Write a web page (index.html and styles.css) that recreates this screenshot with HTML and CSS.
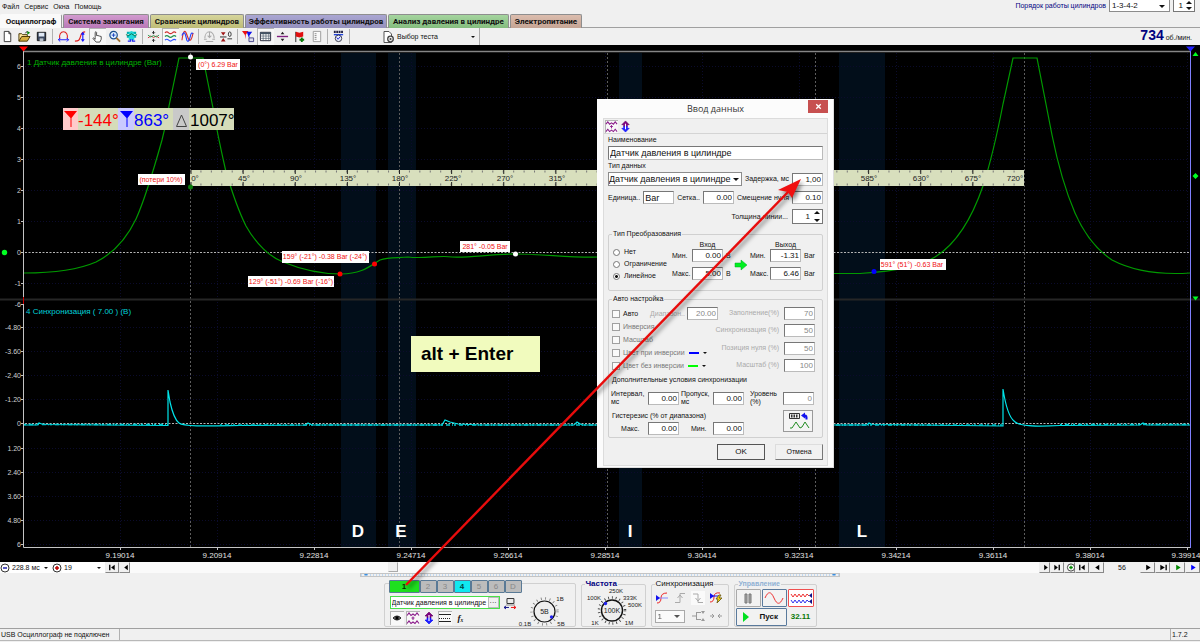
FILE: index.html
```html
<!DOCTYPE html>
<html lang="ru">
<head>
<meta charset="utf-8">
<title>USB Осциллограф</title>
<link rel="stylesheet" href="styles.css">
</head>
<body>
<svg class="defs" aria-hidden="true">
  <symbol id="i-waves" viewBox="0 0 14 14"><path d="M1 4.500l2-2.500 2 2.500L7 3l2 1.500L11 2l2 2.500M1 12.500l2-2.500 2 2.500L7 11l2 1.500 2-2.500 2 2.500" fill="none" stroke="#8a1a8a" stroke-width="1.100"/><path d="M7 5.500v3.500M5.500 7h3" stroke="#8a1a8a"/></symbol>
  <symbol id="i-updown" viewBox="0 0 14 14"><path d="M7 1l4 4H9v2H5V5H3z" fill="#800080" stroke="#600060" stroke-width=".6"/><path d="M7 13l4-4H9V7H5v2H3z" fill="#22f" stroke="#00f" stroke-width=".6"/><path d="M7 4v6" stroke="#fff" stroke-width="1.200"/></symbol>
</svg>
<div class="app">
  <header class="head">
    <div class="head-left">
      <nav class="menu"><button>Файл</button><button>Сервис</button><button>Окна</button><button>Помощь</button></nav>
      <div class="tabs" role="tablist">
        <button class="tab tab-on" role="tab">Осциллограф</button>
        <button class="tab tab-pink" role="tab">Система зажигания</button>
        <button class="tab tab-olive" role="tab">Сравнение цилиндров</button>
        <button class="tab tab-violet" role="tab">Эффективность работы цилиндров</button>
        <button class="tab tab-green" role="tab">Анализ давления в цилиндре</button>
        <button class="tab tab-rose" role="tab">Электропитание</button>
      </div>
    </div>
    <div class="order">
      <label for="order">Порядок работы цилиндров</label>
      <span class="pick order-pick"><select id="order"><option>1-3-4-2</option></select></span>
      <span class="spin order-spin"><input aria-label="Цилиндр" value="1"><i></i></span>
    </div>
  </header>

  <div class="toolbar">
    <button class="tool" aria-label="Новый"><svg viewBox="0 0 14 14"><path d="M3.500 1.500h5l2 2.500v8.500h-7z" fill="#fff" stroke="#333"/><path d="M8.500 1.500V4h2" fill="none" stroke="#333"/></svg></button>
    <button class="tool" aria-label="Открыть"><svg viewBox="0 0 14 14"><path d="M1 12V4h3l1 1h5v2" fill="#ffe9a0" stroke="#443300"/><path d="M1 12l3-5h9l-3 5z" fill="#d8b040" stroke="#443300"/><path d="M8 3.500c1-2 2-2 3-1" fill="none" stroke="#222"/><path d="M10 1l3 2-3 2z" fill="#080"/></svg></button>
    <button class="tool" aria-label="Сохранить"><svg viewBox="0 0 14 14"><path d="M2.500 2.500h9v9h-9z" fill="#39465e" stroke="#111"/><path d="M4 3h6v4H4z" fill="#dfe8f4"/><path d="M5 9h4v3H5z" fill="#b8c0cc"/></svg></button>
    <i class="sep"></i>
    <button class="tool" aria-label="Период"><svg viewBox="0 0 14 14"><path d="M3 9.500C2 5 4 2 7 2s5 3 4 7.500" fill="none" stroke="#e02020" stroke-width="1.100"/><path d="M1.500 10.500h11M3.500 8.500l-2 2 2 2M10.500 8.500l2 2-2 2" fill="none" stroke="#1515ff"/></svg></button>
    <button class="tool" aria-label="Амплитуда"><svg viewBox="0 0 14 14"><path d="M1 12c4 0 5-1 6-5s2-5 5-5" fill="none" stroke="#e02020" stroke-width="1.200"/><path d="M9.500 3v9M8 5l1.500-2L11 5M8 10l1.500 2L11 10" fill="none" stroke="#1515ff" stroke-width="1.200"/></svg></button>
    <button class="tool tool-on" aria-label="Рука"><svg viewBox="0 0 14 14"><path d="M4.500 8V2.500q1-1.500 1.500 0V6l1.500 0 1.500.5 2 .5v3l-1.500 3h-4L2 9q0-1.500 2.500 1z" fill="#fff" stroke="#333" stroke-width=".9"/></svg></button>
    <button class="tool" aria-label="Масштаб"><svg viewBox="0 0 14 14"><circle cx="6" cy="5.500" r="4" fill="#dff0ff" stroke="#1b4f8f" stroke-width="1.300"/><path d="M6 3.500v4M4 5.500h4" stroke="#1540c0"/><path d="M9 8.500l4 4" stroke="#a07030" stroke-width="2"/></svg></button>
    <button class="tool" aria-label="Авто"><svg viewBox="0 0 14 14"><path d="M2 3h10M2 7h10" stroke="#00b0b0" stroke-width="2.500"/><path d="M4 3l3-2 3 2v8H4z" fill="#20d8d8"/><path d="M1 5l3 1 3-2 3 2 3-1" fill="none" stroke="#087048"/><path d="M3 12h3v-2M11 12H8v-2" fill="none" stroke="#22e" stroke-width="1.200"/></svg></button>
    <i class="sep"></i>
    <button class="tool" aria-label="Сжать"><svg viewBox="0 0 14 14"><path d="M1 8.500l3-2 3 1.500 3-1.500 3 2" fill="none" stroke="#d03030"/><path d="M1 5.500l3 2L7 6l3 1.500 3-2" fill="none" stroke="#2a9a50"/><path d="M7 1v3M5.500 2.500L7 4l1.500-1.500M7 13v-3M5.500 11.500L7 10l1.500 1.500" fill="none" stroke="#222"/></svg></button>
    <button class="tool tool-on" aria-label="Раздельно"><svg viewBox="0 0 14 14"><path d="M1 3q2-2 4 0t4 0 4 0" fill="none" stroke="#d03030" stroke-width="1.200"/><path d="M1 7q2-2 4 0t4 0 4 0" fill="none" stroke="#209050" stroke-width="1.200"/><path d="M1 11q2-2 4 0t4 0 4 0" fill="none" stroke="#3050ff" stroke-width="1.200"/></svg></button>
    <button class="tool" aria-label="Вместе"><svg viewBox="0 0 14 14"><path d="M1 11C3-3 5 1 7 7s4 6 6-4" fill="none" stroke="#d03030" stroke-width="1.200"/><path d="M1 6c3-7 4 0 5 4s3 2 4-3 2-4 3-3" fill="none" stroke="#2040ff" stroke-width="1.200"/></svg></button>
    <i class="sep"></i>
    <button class="tool" aria-label="Автомасштаб"><svg viewBox="0 0 14 14"><path d="M2 9C2 5 4 2 7 2s5 3 5 7M7 2v6M5 6l2 2 2-2M1 10h3M10 10h3M3 12.500h8" fill="none" stroke="#aaa" stroke-width="1.100"/></svg></button>
    <button class="tool" aria-label="Ноль"><svg viewBox="0 0 14 14"><path d="M0 7.500h7" stroke="#222"/><path d="M1 2.500h5L3.500 6zM1 12.500h5l-2.500-4z" fill="#a01818"/><ellipse cx="10.500" cy="4.500" rx="1.500" ry="2.500" fill="none" stroke="#333"/><path d="M8 9.500h5" stroke="#333"/></svg></button>
    <i class="sep"></i>
    <button class="tool" aria-label="Маркер"><svg viewBox="0 0 14 14"><path d="M0 1h7L4 5v5L3 5z" fill="#e11"/><path d="M5 2h6L8 6v4z" fill="#11e"/><path d="M7.500 8.500h5v4h-5z" fill="#dde" stroke="#448"/></svg></button>
    <button class="tool tool-on" aria-label="Таблица"><svg viewBox="0 0 14 14"><path d="M1.500 2.500h11v9h-11z" fill="#fff" stroke="#223"/><path d="M1 3.500h12" stroke="#456" stroke-width="2"/><path d="M4.500 3v9M7.500 3v9M10.500 3v9M1 6.500h12M1 9h12" stroke="#456" stroke-width=".7"/></svg></button>
    <button class="tool" aria-label="Разделить"><svg viewBox="0 0 14 14"><path d="M1 7h12" stroke="#802080" stroke-width="1.500"/><path d="M5 4.500L7 2l2 2.500zM5 9.500L7 12l2-2.500z" fill="#222"/></svg></button>
    <button class="tool" aria-label="Флаг"><svg viewBox="0 0 14 14"><path d="M3 2v11" stroke="#222"/><path d="M3 2l4 1 4-1v5L7 8 3 7z" fill="#e01010"/><path d="M9.500 8v5M7 10.500h5" stroke="#087808" stroke-width="2"/></svg></button>
    <button class="tool" aria-label="Отчёт"><svg viewBox="0 0 14 14"><path d="M3.500 1.500h8v11h-8z" fill="#fafafa" stroke="#999"/><path d="M5 4h2M5 6h2M5 8h2M5 10h2" stroke="#888"/></svg></button>
    <i class="sep"></i>
    <button class="tool" aria-label="Авто поиск"><svg viewBox="0 0 14 14"><path d="M2 2h10" stroke="#224" stroke-width="2.500" stroke-dasharray="2 .6"/><path d="M2 5h10" stroke="#24d" stroke-width="1.500"/><circle cx="7" cy="9" r="3.500" fill="#e8f0ff" stroke="#334"/><path d="M5 8l1.500 2L9 7" fill="none" stroke="#22c"/></svg></button>
    <i class="sep"></i>
    <button class="test"><svg viewBox="0 0 14 14"><path d="M3 1.500h5l2.500 2.500v8.500H3z" fill="#fff" stroke="#555"/><circle cx="9.500" cy="9" r="2.800" fill="#eee" stroke="#444" stroke-width="1.300"/><circle cx="9.500" cy="9" r="1" fill="#444"/></svg><span>Выбор теста</span><b class="caret"></b></button>
    <output class="rpm"><strong>734</strong> об./мин.</output>
  </div>

  <main class="stage">
    <svg class="chart" viewBox="0 45 1200 517" role="img" aria-label="Осциллограмма">
      <rect y="45" width="1200" height="517"/>
      <g fill="#020e1a"><path d="M341 53h35v494h-35zM388 53h28v494h-28zM619 53h23v494h-23zM839 53h46v494h-46z"/></g>
      <g stroke="#0b0b2c" stroke-dasharray="1 2"><path d="M120.500 53v494M217.500 53v494M314.500 53v494M411.500 53v494M508.500 53v494M605.500 53v494M702.500 53v494M799.500 53v494M896.500 53v494M993.500 53v494M1090.500 53v494M1187.500 53v494"/><path d="M25 66.500h1164M25 97.500h1164M25 128.500h1164M25 159.500h1164M25 190.500h1164M25 221.500h1164M25 283.500h1164M25 327.500h1164M25 351.500h1164M25 375.500h1164M25 399.500h1164M25 448.500h1164M25 472.500h1164M25 496.500h1164M25 520.500h1164M25 544.500h1164"/></g>
      <path d="M190.500 53v494M399.500 53v494M607.500 53v494M815.500 53v494M1024.500 53v494" stroke="#5c5c5c" stroke-dasharray="2 2"/>
      <path d="M25 252.500h1165M25 423.500h1165" stroke="#b4b4b4" stroke-dasharray="2 1.500"/>
      <path d="M0 299.500h1200" stroke="#262626" stroke-width="2"/>
      <path d="M24 51.500h1166" stroke="#858585" stroke-width="1.500"/>
      <path d="M23.500 51v496.500H1190" fill="none" stroke="#c4c4c4"/>
      <path d="M23.500 297v7" stroke="#c00"/>
      <path d="M21 66.500h2M21 97.500h2M21 128.500h2M21 159.500h2M21 190.500h2M21 221.500h2M21 252.500h2M21 283.500h2M21 304.500h2M21 327.500h2M21 351.500h2M21 375.500h2M21 399.500h2M21 423.500h2M21 448.500h2M21 472.500h2M21 496.500h2M21 520.500h2M21 544.500h2" stroke="#c4c4c4"/>
      <path d="M120.500 548v2M217.500 548v2M314.500 548v2M411.500 548v2M508.500 548v2M605.500 548v2M702.500 548v2M799.500 548v2M896.500 548v2M993.500 548v2M1090.500 548v2M1187.500 548v2" stroke="#c4c4c4"/>
      <g class="ylab"><text x="21" y="69">6</text><text x="21" y="100">5</text><text x="21" y="131">4</text><text x="21" y="162">3</text><text x="21" y="193">2</text><text x="21" y="224">1</text><text x="21" y="255">0</text><text x="21" y="286">-1</text><text x="21" y="307">-6</text><text x="21" y="330">-4.80</text><text x="21" y="354">-3.60</text><text x="21" y="378">-2.40</text><text x="21" y="402">-1.20</text><text x="21" y="426">0</text><text x="21" y="451">1.20</text><text x="21" y="475">2.40</text><text x="21" y="499">3.60</text><text x="21" y="523">4.80</text><text x="21" y="547">6</text></g>
      <g class="xlab"><text x="120" y="558">9.19014</text><text x="217" y="558">9.20914</text><text x="314" y="558">9.22814</text><text x="411" y="558">9.24714</text><text x="508" y="558">9.26614</text><text x="605" y="558">9.28514</text><text x="702" y="558">9.30414</text><text x="799" y="558">9.32314</text><text x="896" y="558">9.34214</text><text x="993" y="558">9.36114</text><text x="1090" y="558">9.38014</text><text x="1186" y="558">9.39914</text></g>
      <path class="trace-green" d="M24 273C55 273 80 269 96 262C112 254 126 240 136 219C146 197 155 165 162 140C165 128 168 113 169 106L179 58H203L213 108C216 126 221 150 226 172C232 192 238 210 246 226C256 244 270 257 283 262C300 269 322 274 341 274C362 274 370 266 380 260C388 257 398 258 408 257C425 259 440 255 452 257C470 258 490 254 516 254C545 254 570 258 600 257M834 273.500H860C900 271 920 266 935 257C958 243 973 215 983 186C992 158 998 130 1003 104L1013 58H1037L1052 135C1058 165 1066 192 1075 213C1086 238 1100 252 1112 260C1135 272 1160 275 1190 273"/>
      <path class="trace-cyan" d="M24 425H37L39 423L43 424.500L168 425.500V390L170 402C172 411 175 420 179 423C184 427 210 426 240 425.500L306 425L308 423L312 425H442L445 420L450 422L458 424L480 425H574L577 422L582 425H867L869 423L872 424.500L1003 426V389C1005 402 1008 416 1014 421C1019 427 1040 426.500 1060 425.500L1140 425L1143 423L1147 425H1190"/>
      <path d="M24 424.500h144M220 425h782M1060 424.500h130" stroke="#00c8d0" stroke-width="1.500" stroke-dasharray="2 3 4 2 1 1"/>
      <text class="cap cap-green" x="27" y="65">1 Датчик давления в цилиндре (Bar)</text>
      <text class="cap cap-cyan" x="26" y="314">4 Синхронизация ( 7.00 ) (B)</text>
      <g><rect x="190" y="170" width="834" height="16" fill="#d8dfbd"/><path d="M190 171.500h834M190 184.500h834" stroke="#777" stroke-width="2" stroke-dasharray="1 9.425"/><path d="M190.500 172h834M190.500 184h834" stroke="#222" stroke-width="4" stroke-dasharray="1 51.125"/></g>
      <g class="deg"><text x="195" y="181">0°</text><text x="244" y="181">45°</text><text x="296" y="181">90°</text><text x="348" y="181">135°</text><text x="400" y="181">180°</text><text x="453" y="181">225°</text><text x="505" y="181">270°</text><text x="557" y="181">315°</text><text x="869" y="181">585°</text><text x="921" y="181">630°</text><text x="973" y="181">675°</text><text x="1015" y="181">720°</text></g>
      <g class="note"><rect x="196" y="59" width="44" height="11"/><text x="218" y="67">(0°) 6.29 Bar</text><rect x="138" y="174" width="47" height="11"/><text x="161" y="182">(потери 10%)</text><rect x="282" y="251" width="87" height="12"/><text x="325" y="259">159° (-21°) -0.38 Bar (-24°)</text><rect x="248" y="276" width="86" height="11"/><text x="291" y="284">129° (-51°) -0.69 Bar (-16°)</text><rect x="460" y="241" width="50" height="11"/><text x="485" y="249">281° -0.05 Bar</text><rect x="880" y="259" width="66" height="11"/><text x="912" y="267">591° (51°) -0.63 Bar</text></g>
      <circle cx="190.500" cy="57" r="2.500" fill="#fff"/><circle cx="515.500" cy="254" r="2.500" fill="#fff"/><circle cx="190.500" cy="187" r="2.500" fill="#087808"/><circle cx="340" cy="274" r="2.500" fill="#f00"/><circle cx="374.500" cy="264" r="2.500" fill="#f00"/><circle cx="874" cy="271.500" r="2.500" fill="#00f"/><circle cx="4.500" cy="252.500" r="2.700" fill="#0f2"/>
      <path d="M19 46.500h9l-4.500 5z" fill="#f00"/><path d="M1190.500 50v498" stroke="#8080ff"/><path d="M1186 46.500h9l-4.500 5z" fill="#22f"/><path d="M1192.500 56l3-4 3 4zM1195.500 173l3 3-3 3-3-3zM1192.500 296.500h6l-3 4z" fill="#0f2"/>
      <g class="meter"><rect x="63" y="108" width="171" height="22" fill="#d5dcb9"/><rect x="63" y="108" width="15" height="22" fill="#ffcaca"/><rect x="118" y="108" width="16" height="22" fill="#cacaff"/><rect x="173" y="108" width="16" height="22" fill="#c9c9c9"/><path d="M64 111h13l-5.500 7v9h-1v-9z" fill="#f00"/><path d="M120 111h13l-5.500 7v9h-1v-9z" fill="#00f"/><path d="M181.500 115l-5 11.500h10z" fill="none" stroke="#444"/><text x="78" y="126" fill="#f00">-144°</text><text x="134" y="126" fill="#00f">863°</text><text x="190" y="126" fill="#000">1007°</text></g>
      <g class="zone"><text x="358" y="537">D</text><text x="401" y="537">E</text><text x="630" y="537">I</text><text x="862" y="537">L</text></g>
    </svg>
    <div class="hint">alt + Enter</div>

    <section class="dialog" role="dialog" aria-labelledby="dlg-title">
      <div class="dlg-head"><h1 id="dlg-title">Ввод данных</h1><button class="close" aria-label="Закрыть"><svg viewBox="0 0 8 8"><path d="M2 2l4 4M6 2L2 6" stroke="#fff" stroke-width="1.200"/></svg></button></div>
      <form class="dlg-body">
        <div class="dlg-tools"><button type="button" class="tool-on" aria-label="Сигнал"><svg><use href="#i-waves"/></svg></button><button type="button" aria-label="Положение"><svg><use href="#i-updown"/></svg></button></div>
        <div class="dlg-form">
          <label for="name">Наименование</label>
          <input id="name" class="wide" value="Датчик давления в цилиндре">
          <label for="kind">Тип данных</label>
          <div class="row row-kind"><span class="pick kind-pick"><select id="kind"><option>Датчик давления в цилиндре</option></select></span><label for="delay">Задержка, мс</label><input id="delay" value="1,00"></div>
          <div class="row row-unit"><label for="unit">Единица..</label><input id="unit" class="unit" value="Bar"><label for="grid">Сетка..</label><input id="grid" value="0.00"><label for="shift">Смещение нуля</label><input id="shift" value="0.10"></div>
          <div class="row row-line"><label for="line">Толщина линии...</label><span class="spin"><input id="line" value="1"><i></i></span></div>
          <fieldset class="conv"><legend>Тип Преобразования</legend>
            <div class="radios"><label><input type="radio" name="c">Нет</label><label><input type="radio" name="c">Ограничение</label><label><input type="radio" name="c" checked>Линейное</label></div>
            <div class="io">
              <span class="in-h">Вход</span><span class="out-h">Выход</span>
              <svg class="go" viewBox="0 0 14 12"><path d="M1 4h6V1l6 5-6 5V8H1z" fill="#00f020" stroke="#0a2" stroke-width=".5"/></svg>
              <label class="lo" for="in-min">Мин.</label><input class="lo" id="in-min" value="0.00"><span class="lo">B</span>
              <label class="lo" for="out-min">Мин.</label><input class="lo" id="out-min" value="-1.31"><span class="lo">Bar</span>
              <label class="hi" for="in-max">Макс.</label><input class="hi" id="in-max" value="5.00"><span class="hi">B</span>
              <label class="hi" for="out-max">Макс.</label><input class="hi" id="out-max" value="6.46"><span class="hi">Bar</span>
            </div>
          </fieldset>
          <fieldset class="auto"><legend>Авто настройка</legend>
            <div class="auto-top">
              <div class="checks">
                <div class="check"><label><input type="checkbox">Авто</label><label class="dim" for="range">Диапазон..</label><input id="range" value="20.00" disabled></div>
                <div class="check"><label class="off"><input type="checkbox" disabled>Инверсия</label></div>
                <div class="check"><label class="off"><input type="checkbox" disabled>Масштаб</label></div>
                <div class="check"><label class="off"><input type="checkbox" disabled>Цвет при инверсии</label><i class="ink ink-blue"></i><b class="caret"></b></div>
                <div class="check"><label class="off"><input type="checkbox" disabled>Цвет без инверсии</label><i class="ink ink-green"></i><b class="caret"></b></div>
              </div>
              <div class="percents">
                <label class="dim" for="p1">Заполнение(%)</label><input id="p1" value="70" disabled>
                <label class="dim" for="p2">Синхронизация (%)</label><input id="p2" value="50" disabled>
                <label class="dim" for="p3">Позиция нуля (%)</label><input id="p3" value="50" disabled>
                <label class="dim" for="p4">Масштаб (%)</label><input id="p4" value="100" disabled>
              </div>
            </div>
            <p>Дополнительные условия синхронизации</p>
            <div class="sync"><label for="s1">Интервал, мс</label><input id="s1" value="0.00"><label for="s2">Пропуск, мс</label><input id="s2" value="0.00"><label for="s3">Уровень (%)</label><input id="s3" value="0" disabled></div>
            <div class="hyst"><div><p>Гистерезис (% от диапазона)</p><div class="hyst-row"><label for="h1">Макс.</label><input id="h1" value="0.00"><label for="h2">Мин.</label><input id="h2" value="0.00"></div></div>
              <button type="button" class="learn" aria-label="Настроить"><svg viewBox="0 0 28 20"><path d="M5.500 2.500h10v5h-10z" fill="#eee" stroke="#333"/><path d="M7 5h7" stroke="#333" stroke-width="3" stroke-dasharray="1.500 1"/><path d="M17 4.500l4-3v2q3 0 2.500 5h-2q0-2.500-.5-2.500v1.500z" fill="#11e"/><path d="M6 17h2l4-6 4 6 2-1 3-5 4 6" fill="none" stroke="#228b22"/></svg></button></div>
          </fieldset>
          <div class="buttons"><button type="submit">OK</button><button type="button">Отмена</button></div>
        </div>
      </form>
    </section>
  </main>

  <div class="scroll">
    <svg class="round" viewBox="0 0 10 10"><circle cx="5" cy="5" r="4" fill="#fff" stroke="#333"/><path d="M3 5h4" stroke="#22a" stroke-width="1.500"/></svg>
    <span class="pick time-pick"><select aria-label="Развёртка"><option>228.8 мс</option></select></span>
    <svg class="round" viewBox="0 0 10 10"><circle cx="5" cy="5" r="4" fill="#fff" stroke="#333"/><path d="M3 5h4M5 3v4" stroke="#b00" stroke-width="1.500"/></svg>
    <span class="pick num-pick"><select aria-label="Кадр"><option>19</option></select></span>
    <button aria-label="В начало"><svg viewBox="0 0 12 10"><path d="M3.500 2v6" stroke="#000" stroke-width="1.500"/><path d="M9 2L5 5l4 3z"/></svg></button>
    <button class="slim" aria-label="Назад"><svg viewBox="0 0 12 10"><path d="M8 2L4 5l4 3z"/></svg></button>
    <div class="track"><i></i></div>
    <button class="slim" aria-label="Вперёд"><svg viewBox="0 0 12 10"><path d="M4 2l4 3-4 3z"/></svg></button>
    <button aria-label="В конец"><svg viewBox="0 0 12 10"><path d="M8.500 2v6" stroke="#000" stroke-width="1.500"/><path d="M3 2l4 3-4 3z"/></svg></button>
    <button class="slim" aria-label="Добавить"><svg viewBox="0 0 12 10"><circle cx="6" cy="5" r="4" fill="#fff" stroke="#333"/><path d="M4 5h4M6 3v4" stroke="#080" stroke-width="1.500"/></svg></button>
    <button aria-label="Первый"><svg viewBox="0 0 12 10"><path d="M3.500 2v6" stroke="#000" stroke-width="1.500"/><path d="M9 2L5 5l4 3z"/></svg></button>
    <button class="big" aria-label="Предыдущий"><svg viewBox="0 0 12 10"><path d="M8.500 2L4 5l4.500 3z"/></svg></button>
    <span class="frame">56</span>
    <button class="big" aria-label="Следующий"><svg viewBox="0 0 12 10"><path d="M4 2l5 3-5 3z"/></svg></button>
    <button class="big" aria-label="Последний"><svg viewBox="0 0 12 10"><path d="M9.500 2v6" stroke="#000" stroke-width="1.500"/><path d="M3 2l5 3-5 3z"/></svg></button>
    <button class="big" aria-label="Пуск просмотра"><svg viewBox="0 0 12 10"><path d="M4 2l5 3-5 3z" fill="#080"/></svg></button>
    <button class="big" aria-label="Воспроизвести"><svg viewBox="0 0 12 10"><path d="M4 2l5 3-5 3z" fill="#00f"/></svg></button>
  </div>
  <div class="splitter"><b></b><b></b></div>

  <div class="panel">
    <section class="group channel">
      <div class="chans"><button class="c1">1</button><button>2</button><button>3</button><button class="c4">4</button><button>5</button><button>6</button><button>D</button></div>
      <div class="channel-main">
        <div class="source">
          <div class="source-row"><span class="source-box"><input aria-label="Датчик" value="Датчик давления в цилиндре"><button aria-label="Выбрать">···</button></span><svg class="probe" viewBox="0 0 12 14"><path d="M3 2.500h7v5H3z" fill="#eee" stroke="#333"/><path d="M2 9h9" stroke="#888"/><path d="M0 11.500h5M2 10l-2 1.500L2 13" fill="none" stroke="#118"/><path d="M7 11.500h5M10 10l2 1.500-2 1.500" fill="none" stroke="#e11"/></svg></div>
          <div class="view"><button class="tool-on" aria-label="Видимость"><svg viewBox="0 0 14 14"><path d="M3 7q4-4 8 0-4 4-8 0z" fill="#777" stroke="#222"/><circle cx="7" cy="7" r="1.700"/></svg></button><button class="tool-on" aria-label="Сигнал"><svg><use href="#i-waves"/></svg></button><button aria-label="Положение"><svg><use href="#i-updown"/></svg></button><button class="tool-on" aria-label="Линии"><svg viewBox="0 0 14 14"><path d="M1 3.500h12M1 10.500h12" stroke="#222"/><path d="M1 7.500h12" stroke="#222" stroke-dasharray="1 1"/></svg></button><button class="fx" aria-label="Функция">fₓ</button></div>
        </div>
        <svg class="dial" viewBox="517 592 58 36" aria-label="Шкала"><circle cx="545.500" cy="610.500" r="13" fill="none" stroke="#777" stroke-width="2.500" stroke-dasharray=".8 3.600"/><circle cx="545.500" cy="610.500" r="10.500" fill="#eee" stroke="#111" stroke-width="1.200"/><circle cx="552.500" cy="616" r="1.700" fill="#22e"/><text x="545.500" y="613" class="dial-val">5В</text><text x="561" y="600">1В</text><text x="562" y="625">5В</text><text x="526" y="625">0.1В</text></svg>
      </div>
    </section>
    <fieldset class="group freq"><legend>Частота</legend>
      <svg viewBox="583 587 60 40" aria-label="Частота"><circle cx="611" cy="610.500" r="13" fill="none" stroke="#333" stroke-width="2.500" stroke-dasharray=".8 3"/><circle cx="611" cy="610.500" r="10.500" fill="#eee" stroke="#111" stroke-width="1.400"/><circle cx="604.500" cy="603.500" r="1.700" fill="#22e"/><text x="611" y="613" class="dial-val">100K</text><text x="615" y="593">250K</text><text x="593" y="600">100K</text><text x="629" y="600">333K</text><text x="634" y="607">500K</text><text x="594" y="625">1K</text><text x="628" y="625">1M</text></svg>
    </fieldset>
    <fieldset class="group trig"><legend>Синхронизация</legend>
      <div class="trig-grid">
        <svg viewBox="0 0 14 14"><path d="M2 12q4 0 4-5t6-5" fill="none" stroke="#e22"/><path d="M1 7h12" stroke="#88f"/><path d="M1 4l4 3-4 3z" fill="#11e"/></svg>
        <svg viewBox="0 0 14 14"><path d="M2 11.500h5v-9h5M4.500 7L7 4l2.500 3" fill="none" stroke="#aaa"/></svg>
        <svg class="lit" viewBox="0 0 14 14"><path d="M2 3h5v8.500h5M4.500 7L7 10l2.500-3" fill="none" stroke="#aaa"/></svg>
        <svg viewBox="0 0 14 14"><path d="M1 11q4 0 4-5t6-4" fill="none" stroke="#e22"/><path d="M1 5h9" stroke="#11e"/><path d="M1 2l4 3-4 3z" fill="#11e"/><path d="M10 4l-3 4h2l-1 4 5-5h-3l2-3z" fill="#fd0" stroke="#762"/></svg>
        <span class="pick trig-pick"><select aria-label="Канал"><option>1</option></select></span>
        <svg viewBox="0 0 14 14"><path d="M1 7h4M6 3.500h4M6 10.500h4M5.500 3v8" fill="none" stroke="#999"/><path d="M10 2h4l-2 3zM10 12h4l-2-3z" fill="#999"/></svg>
        <svg viewBox="0 0 14 14"><path d="M1 7h4M3 5l2 2-2 2M13 7H9M11 5L9 7l2 2" fill="none" stroke="#999"/></svg>
      </div>
    </fieldset>
    <fieldset class="group run"><legend>Управление</legend>
      <div class="run-grid">
        <button aria-label="Пауза"><svg viewBox="0 0 22 14"><path d="M8 3h2v9H8zM12 3h2v9h-2z" fill="#aaa" stroke="#777"/></svg></button>
        <button class="blue" aria-label="Одиночный"><svg viewBox="0 0 22 14"><path d="M2 7C5 0 8 0 11 7s6 7 9 0" fill="none" stroke="#e33"/></svg></button>
        <button class="red" aria-label="Непрерывный"><svg viewBox="0 0 22 14"><path d="M1 3l2 3 2-3 2 3 2-3 2 3 2-3 2 3 2-3 2 2" fill="none" stroke="#e33"/><path d="M1 9l2 3 2-3 2 3 2-3 2 3 2-3 2 3 2-3 2 2" fill="none" stroke="#33e"/><path d="M22 2v5l-3-2.500zM22 8v5l-3-2.500z" fill="#118"/></svg></button>
        <button class="start blue"><svg viewBox="0 0 8 12"><path d="M1 1l6 5-6 5z" fill="#00e020"/></svg><span>Пуск</span></button>
        <output>32.11</output>
      </div>
    </fieldset>
  </div>
  <footer class="status"><span>USB Осциллограф не подключен</span><span></span><span>1.7.2</span></footer>

  <svg class="pointer" viewBox="0 0 1200 642" aria-hidden="true"><path d="M406 585L789 191" stroke="#e80c0c" stroke-width="2.400"/><path d="M801 179l-9 19-4-6-10-2z" fill="#f01010"/></svg>
</div>
</body>
</html>
```
FILE: styles.css
```css
* { box-sizing: border-box; }
body { margin: 0; background: #f0f0f0; font: 7px/12px "Liberation Sans", Arial, sans-serif; color: #111; }
.defs { display: none; }
button, input, select { font: inherit; color: inherit; margin: 0; padding: 0; }
button { border: 0; background: none; }
p { margin: 0; }
svg { display: block; }
.app { position: relative; display: flex; flex-direction: column; min-height: 100vh; overflow: hidden; }

.caret { width: 0; height: 0; border: 3px solid transparent; border-top-color: #111; border-bottom: 0; flex: none; }
.pick { display: flex; position: relative; background: #fff; border: 1px solid #8c8c8c; }
.pick select { appearance: none; flex: 1; min-width: 0; border: 0; background: none; font-size: 8px; padding: 0 2px; }
.pick::after { content: ""; position: absolute; right: 4px; top: calc(50% - 1px); border: 3px solid transparent; border-top-color: #111; border-bottom: 0; }
.spin { display: flex; background: #fff; border: 1px solid #777; }
.spin input { border: 0; background: none; flex: 1; min-width: 0; width: 0; text-align: right; font-size: 8px; }
.spin i { width: 11px; position: relative; }
.spin i::before, .spin i::after { content: ""; position: absolute; left: 3px; border: 3px solid transparent; }
.spin i::before { top: 1px; border-bottom-color: #111; border-top: 0; }
.spin i::after { bottom: 1px; border-top-color: #111; border-bottom: 0; }
.tool-on { background: #f8f8f8; box-shadow: inset 1px 1px #b4b4b4; }

.head { display: flex; justify-content: space-between; height: 28px; border-bottom: 1px solid #a0a0a0; }
.menu { display: flex; height: 14px; padding: 0 2px; gap: 5px; }
.tabs { display: grid; grid-template-columns: 62px 86px 94px 142px 121px 72px; gap: 1px; height: 14px; }
.tab { font: bold 8px/12px Roboto, sans-serif; border: 1px solid #8e8e8e; border-bottom: 0; border-radius: 2px 2px 0 0; white-space: nowrap; }
.tab-on { background: #fafafa; border-color: #fafafa #999 #fafafa #fafafa; }
.tab-pink { background: linear-gradient(#d29bcf, #b878b6); }
.tab-olive { background: linear-gradient(#d6d59c, #bebc76); }
.tab-violet { background: linear-gradient(#aaa6d2, #9490bc); }
.tab-green { background: linear-gradient(#a5d59f, #84bc7e); }
.tab-rose { background: linear-gradient(#dcbdae, #c4a494); }
.order { display: flex; gap: 3px; padding-right: 5px; height: 12px; color: #000080; }
.order-pick { width: 61px; border-top: 0; color: #111; }
.order-spin { width: 22px; border-top: 0; color: #111; }

.toolbar { display: flex; align-items: center; height: 17px; margin-left: -1px; padding-right: 8px; }
.tool { width: 17px; height: 17px; padding: 2px; flex: none; }
.tool svg { width: 13px; height: 13px; }
.sep { width: 5px; height: 15px; border-left: 1px solid #b0b0b0; margin-left: 2px; margin-right: -2px; flex: none; }
.test { display: flex; align-items: center; width: 99px; height: 17px; margin-left: 29px; padding-right: 4px; border-right: 1px solid #aaa; }
.test svg { width: 14px; height: 14px; margin-right: 2px; }
.test .caret { margin-left: auto; border-width: 2px; border-bottom: 0; }
.rpm { margin-left: auto; font-size: 7px; white-space: nowrap; }
.rpm strong { color: #000080; font-size: 14px; }

.stage { position: relative; background: #000; }
.chart { width: 100%; height: auto; }
.chart text { font-family: "Liberation Sans", Arial, sans-serif; }
.ylab { font-size: 7px; fill: #d0d0d0; text-anchor: end; }
.xlab { font-size: 8px; fill: #e0e0e0; text-anchor: middle; }
.trace-green { fill: none; stroke: #009a00; stroke-width: 1.2; }
.trace-cyan { fill: none; stroke: #00e4ea; stroke-width: 1.2; }
.cap { font-size: 8px; }
.cap-green { fill: #00b400; }
.cap-cyan { fill: #00d0d8; }
.deg { font-size: 8px; fill: #222; text-anchor: middle; }
.note { font-size: 7px; text-anchor: middle; fill: #f01010; }
.note rect { fill: #fff; }
.meter text { font-size: 17px; }
.zone { font-size: 17px; font-weight: bold; fill: #fff; text-anchor: middle; }
.hint { position: absolute; left: 34.25%; top: 291px; padding: 0 10px; width: 129px; background: #f1fbbe; color: #000; font: bold 19px/36px "Liberation Sans", Arial, sans-serif; white-space: nowrap; }

.dialog { position: absolute; left: 49.75%; top: 54px; width: 237px; background: #fcfcfc; padding: 0 5px 1px 6px; border: 1px solid #ddd; border-width: 0 1px 1px 0; }
.dlg-head { display: grid; grid-template-columns: 1fr 20px; height: 19px; }
.dlg-head h1 { grid-column: 1 / 3; grid-row: 1; margin: 0; text-align: center; font: 9px/20px "Open Sans", sans-serif; color: #333; }
.close { grid-column: 2; grid-row: 1; height: 13px; margin-top: 1px; background: #c75050; display: grid; place-items: center; }
.close svg { width: 9px; height: 9px; }
.dlg-body { background: #f0f0f0; border: 1px solid #dcdcdc; }
.dlg-tools { display: flex; gap: 1px; height: 15px; border-bottom: 1px solid #d4d4d4; padding: 1px; }
.dlg-tools button { width: 13px; height: 13px; }
.dlg-tools svg { width: 13px; height: 13px; }
.dlg-form { display: flex; flex-direction: column; padding: 0 4px 5px; }
.dlg-form label, .dlg-form span, .dlg-form p, .dlg-form legend { white-space: nowrap; }
.dlg-form input:not([type]) { width: 31px; height: 13px; background: #fff; border: 1px solid #a8a8a8; border-color: #777 #bbb #bbb #777; text-align: right; font-size: 8px; padding: 0 1px; border-radius: 0; }
.dlg-form input:disabled { color: #888; }
.dlg-form .spin input:not([type]) { border: 0; flex: 1; width: 0; height: auto; }
.dlg-form input.wide:not([type]), .dlg-form input.unit:not([type]), .kind-pick select { font-size: 9px; text-align: left; }
.dlg-form input.wide:not([type]) { width: 100%; height: 14px; }
.row { display: flex; justify-content: space-between; align-items: center; margin-bottom: 5px; }
.kind-pick { width: 134px; height: 14px; }
.kind-pick select { padding: 0; }
.kind-pick::after { right: 2px; }
.row-line { justify-content: flex-end; gap: 4px; margin-bottom: 4px; }
.row-line .spin { width: 31px; height: 15px; }
.dlg-form fieldset { margin: 0; padding: 0; border: 1px solid #d0d0d0; border-radius: 2px; min-width: 0; }
.dlg-form legend { margin-left: 3px; padding: 0 1px; }
.dlg-form .conv { display: grid; grid-template-columns: 63px 1fr; padding-bottom: 8px; margin-bottom: 2px; }
.radios { display: flex; flex-direction: column; padding: 6px 0 0 4px; }
.radios label { display: flex; align-items: center; gap: 4px; }
.radios input { appearance: none; width: 7px; height: 7px; border: 1px solid #777; border-radius: 50%; background: #fff; }
.radios input:checked { background: radial-gradient(#111 35%, #fff 45%); }
.io { display: grid; grid-template-columns: 20px 31px 11px 16px 20px 31px 20px; grid-template-rows: 9px 13px 5px 13px; align-items: center; }
.io span { padding-left: 3px; }
.io .in-h { grid-area: 1 / 2; text-align: center; line-height: 9px; padding: 0; }
.io .out-h { grid-area: 1 / 6; text-align: center; line-height: 9px; padding: 0; }
.go { grid-area: 2 / 4 / 5 / 5; width: 14px; height: 12px; }
.lo { grid-row: 2; }
.hi { grid-row: 4; }
.auto-top { display: grid; grid-template-columns: 106px 1fr; padding: 2px 8px 2px 3px; }
.checks { display: flex; flex-direction: column; }
.check { display: flex; align-items: center; height: 13px; }
.check label { display: flex; align-items: center; gap: 3px; }
.check .dim { margin-left: auto; margin-right: 2px; }
.check input[type] { appearance: none; width: 8px; height: 8px; background: #fafafa; border: 1px solid #a0a0a0; }
.off { color: #777; }
.dim { color: #aaa; }
.ink { width: 10px; height: 2px; margin: 0 4px; }
.ink-blue { background: #00f; }
.ink-green { background: #0f0; }
.check .caret { border-width: 2px; border-bottom: 0; }
.percents { display: grid; grid-template-columns: 61px 31px; gap: 4px 5px; justify-items: end; }
.auto p { padding-left: 3px; }
.sync { display: grid; grid-template-columns: 37px 33px 32px 37px 33px 31px; align-items: center; padding-left: 2px; height: 24px; }
.sync label { white-space: normal; line-height: 8px; }
.hyst { display: flex; justify-content: space-between; padding: 0 9px 2px 0; }
.hyst-row { display: flex; align-items: center; padding-left: 12px; }
.hyst-row label { width: 27px; }
.hyst-row label:nth-of-type(2) { width: 34px; padding-left: 12px; }
.learn { width: 30px; height: 22px; border: 1px solid #999; background: #f4f4f4; }
.buttons { display: flex; justify-content: flex-end; gap: 10px; padding-top: 6px; }
.buttons button { width: 48px; height: 16px; border: 1px solid #eee; border-color: #ddd #777 #777 #ddd; background: #f1f1f1; font-size: 7px; }
.buttons button:first-child { border: 1px solid #555; font-size: 8px; }

.scroll { display: flex; align-items: center; height: 11px; background: #fafafa; }
.scroll .round { width: 10px; height: 10px; flex: none; }
.scroll .pick { border: 0; height: 11px; }
.time-pick { width: 42px; }
.num-pick { width: 43px; }
.scroll .pick select { font-size: 7px; }
.scroll .pick::after { border-width: 2px; border-bottom: 0; }
.scroll button { width: 14px; height: 11px; flex: none; border: 1px solid #ccc; border-color: #eee #888 #888 #eee; background: #f0f0f0; display: grid; place-items: center; }
.scroll button.slim { width: 11px; }
.scroll button.big { width: 15px; }
.scroll button svg { width: 12px; height: 9px; overflow: visible; }
.track { flex: 1; height: 11px; padding-left: 21.5%; }
.track i { display: block; width: 10px; height: 10px; background: #f0f0f0; border: 1px solid #aaa; border-top-color: #eee; border-left-color: #eee; }
.frame { width: 36px; text-align: center; font-size: 7px; background: #f0f0f0; line-height: 11px; }
.splitter { align-self: center; display: flex; justify-content: space-between; width: 40%; height: 4px; padding: 0 3px; border: 1px solid #c4c4c4; background: repeating-linear-gradient(90deg, #c0d8f0 0 1px, #f0f0f0 1px 3px); }
.splitter b { border: 2px solid transparent; border-top-color: #3b8fe0; border-bottom: 0; }

.panel { display: flex; justify-content: center; gap: 5px; padding: 2px 0 1px; height: 51px; }
.group { margin: 0; padding: 0; border: 1px solid #d0d0d0; border-radius: 2px; min-width: 0; }
.group legend { font-size: 7px; line-height: 10px; height: 10px; margin-left: 3px; padding: 0 1px; }
.channel { width: 192px; margin-top: 4px; }
.chans { display: grid; grid-template-columns: 31px repeat(6, 17px); margin: -4px 0 3px 4px; height: 13px; }
.chans button { border: 1px solid #5a7a96; background: #bcbcbc; color: #888; font-size: 8px; line-height: 10px; border-radius: 1px; }
.chans .c1 { background: #1ee01e; color: #030; font-weight: bold; }
.chans .c4 { background: #10e8f0; color: #044; font-weight: bold; }
.channel-main { display: flex; padding-left: 5px; }
.source { width: 126px; }
.source-row { display: flex; gap: 4px; }
.source-box { display: flex; width: 111px; height: 13px; border: 1px solid #49e049; background: #fff; }
.source-box input { flex: 1; min-width: 0; border: 0; background: none; padding-left: 1px; }
.source-box button { width: 11px; border: 1px solid #bbb; background: #f0f0f0; line-height: 8px; }
.probe { width: 12px; height: 14px; }
.view { display: flex; gap: 2px; padding-top: 1px; }
.view button { width: 14px; height: 14px; }
.view svg { width: 14px; height: 14px; }
.view .fx { font: italic bold 9px/12px "Liberation Serif", serif; }
.dial { width: 58px; height: 36px; margin-top: -3px; }
.dial text, .freq text { font-size: 6px; text-anchor: middle; fill: #222; }
.dial .dial-val, .freq .dial-val { font-size: 7px; }
.freq { width: 65px; }
.group.freq legend { color: #000080; font-weight: bold; font-size: 8px; }
.freq svg { width: 60px; height: 40px; margin: -2px 0 0 2px; }
.trig { width: 78px; }
.group.trig legend { font-size: 8px; }
.trig-grid { display: grid; grid-template-columns: repeat(4, 18px); row-gap: 4px; padding: 2px 0 0 3px; align-items: center; }
.trig-grid svg { width: 14px; height: 14px; }
.lit { background: #fafafa; }
.trig-pick { grid-column: 1 / 3; width: 30px; height: 13px; opacity: .7; }
.run { width: 83px; }
.group.run legend { color: #8fb0d4; font-weight: bold; }
.run-grid { display: grid; grid-template-columns: 25px 25px 26px; grid-template-rows: 18px 18px; gap: 1px; padding-left: 1px; }
.run-grid button { border: 1px solid #aaa; border-radius: 1px; background: #f2f2f2; display: flex; align-items: center; justify-content: center; }
.run-grid button svg { width: 22px; height: 14px; }
.run-grid .blue { border-color: #5a7a9c; }
.run-grid .red { border-color: #f05050; background: #fff; }
.run-grid .start { grid-column: 1 / 3; font-size: 8px; font-weight: bold; gap: 10px; justify-content: flex-start; padding-left: 5px; }
.run-grid .start svg { width: 8px; height: 12px; }
.run-grid output { align-self: center; text-align: center; color: #087808; font-size: 8px; font-weight: bold; }

.status { display: grid; grid-template-columns: 118px 1fr 30px; gap: 1px; height: 13px; border-top: 1px solid #a0a0a0; border-bottom: 1px solid #b8b8b8; }
.status span { border-left: 1px solid #b0b0b0; padding-left: 1px; white-space: nowrap; line-height: 11px; }
.status span:first-child { border-left: 0; }

.pointer { position: absolute; left: 0; top: 0; width: 100%; height: auto; pointer-events: none; fill: none; filter: drop-shadow(2px 3px 2px rgba(0, 0, 0, .5)); }
```
